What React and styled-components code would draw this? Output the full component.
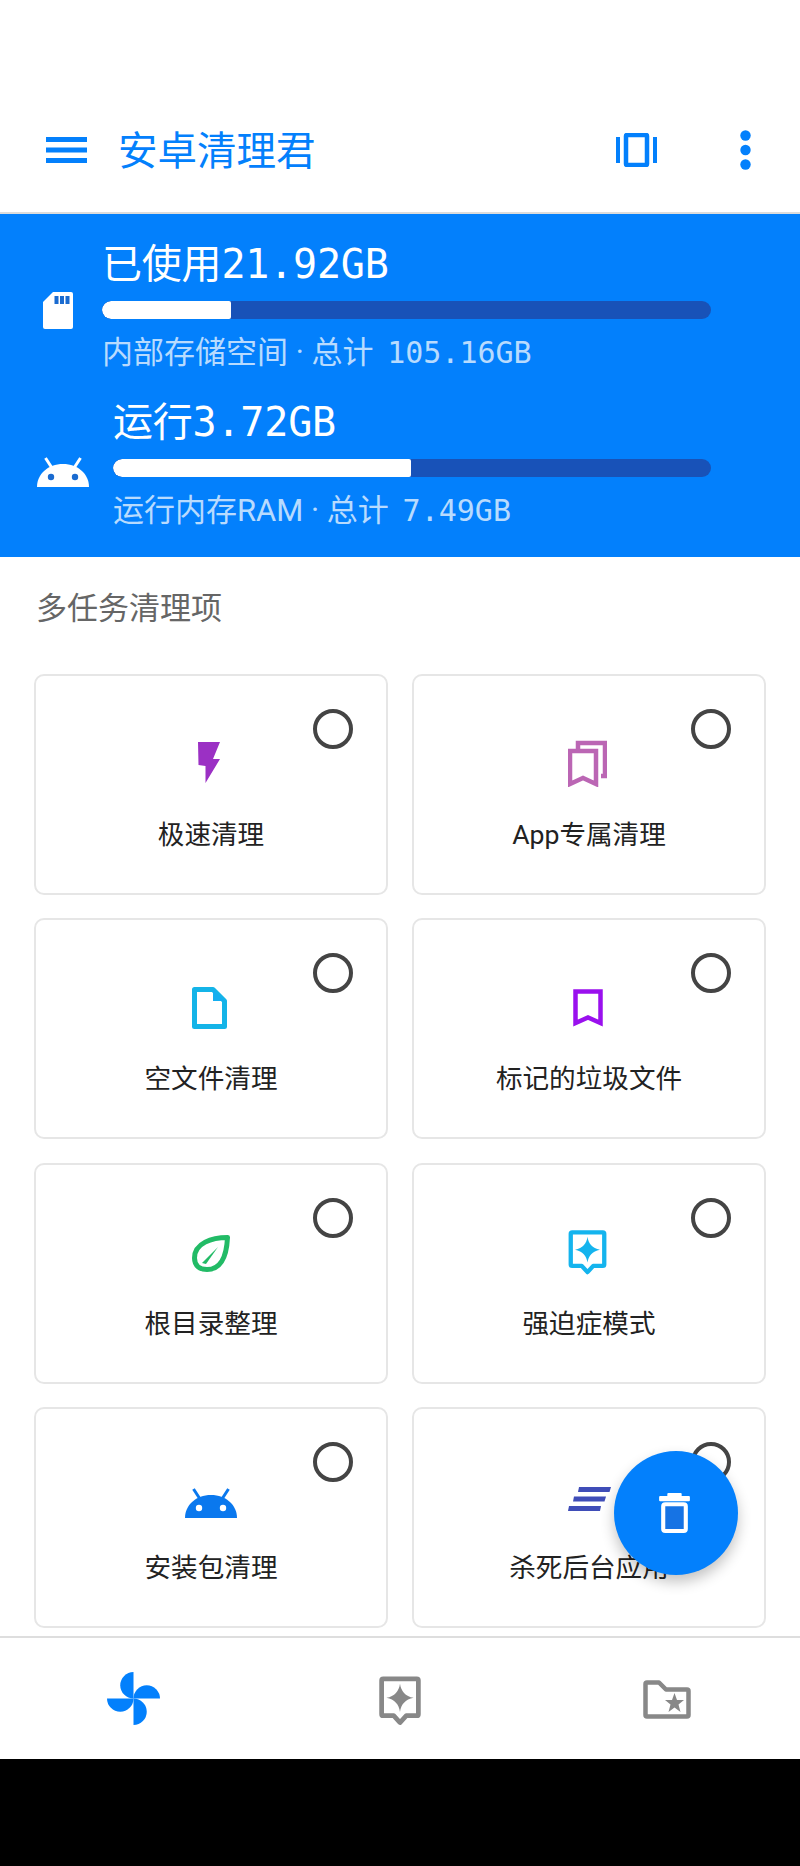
import styled, { createGlobalStyle } from "styled-components";

const BLUE = "#0380fc";
const GREY = "#888888";

const GlobalStyle = createGlobalStyle`
  html, body {
    margin: 0;
    padding: 0;
    background: #ffffff;
  }
  * {
    box-sizing: border-box;
  }
`;

const Page = styled.div`
  position: relative;
  display: flex;
  flex-direction: column;
  width: 800px;
  height: 1866px;
  overflow: hidden;
  background: #fff;
  font-family: Roboto, "Noto Sans CJK SC", sans-serif;
`;

const Header = styled.header`
  display: flex;
  align-items: center;
  height: 214px;
  padding: 119px 49px 31px 46px;
  border-bottom: 2px solid #dcdcdc;
`;

const Title = styled.h1`
  flex: 1;
  margin: 0 0 0 31px;
  padding-top: 3px;
  color: ${BLUE};
  font-size: 39.5px;
  font-weight: 400;
  line-height: 59px;
`;

const HeaderActions = styled.div`
  display: flex;
  align-items: center;
  gap: 82px;
  margin-bottom: 1px;
`;

const StatsPanel = styled.section`
  display: flex;
  flex-direction: column;
  gap: 27px;
  padding: 27px 89px 27px 0;
  background: ${BLUE};
`;

const StatRow = styled.div`
  display: flex;
  align-items: flex-start;
  padding-left: ${(p) => p.$inset}px;
`;

const StatIcon = styled.div`
  display: flex;
  flex: none;
  width: ${(p) => p.$width}px;
  margin-top: ${(p) => p.$top}px;
`;

const StatBody = styled.div`
  flex: 1;
  min-width: 0;
`;

const StatValue = styled.div`
  color: #fff;
  font-family: "DejaVu Sans Mono", "Noto Sans CJK SC", monospace;
  font-size: 40px;
  letter-spacing: -0.2px;
  line-height: 46px;
`;

const Track = styled.div`
  height: 18px;
  margin-top: 14px;
  overflow: hidden;
  border-radius: 9px;
  background: #1852b8;
`;

const Fill = styled.div`
  height: 100%;
  border-radius: 9px 2px 2px 9px;
  background: #fff;
`;

const StatNote = styled.div`
  margin-top: 14px;
  color: rgba(255, 255, 255, 0.72);
  font-size: 31px;
  line-height: 39px;
  white-space: nowrap;
`;

const NoteSize = styled.span`
  margin-left: 6px;
  font-family: "DejaVu Sans Mono", monospace;
  font-size: 30px;
`;

const SectionTitle = styled.h2`
  margin: 32px 0 45px;
  padding-left: 36px;
  color: #666;
  font-size: 31px;
  font-weight: 400;
  line-height: 40px;
`;

const CardGrid = styled.div`
  display: grid;
  grid-template-columns: 354px 354px;
  grid-auto-rows: 221px;
  column-gap: 24px;
  row-gap: 23.4px;
  padding: 0 34px 8px;
`;

const Card = styled.div`
  position: relative;
  display: flex;
  flex-direction: column;
  align-items: center;
  padding-top: 60px;
  border: 2px solid #e6e6e6;
  border-radius: 10px;
  background: #fff;
`;

const Radio = styled.span`
  position: absolute;
  top: 33px;
  right: 33px;
  width: 40px;
  height: 40px;
  border: 4.5px solid #444;
  border-radius: 50%;
`;

const IconSlot = styled.div`
  display: flex;
  align-items: center;
  justify-content: center;
  height: ${(p) => p.$height || 56}px;
  padding-top: ${(p) => p.$nudge || 0}px;
  padding-bottom: ${(p) => p.$lift || 0}px;
  padding-right: ${(p) => p.$pull || 0}px;
`;

const CardLabel = styled.div`
  margin-top: 25px;
  color: #222;
  font-size: 26.6px;
  line-height: 36px;
  white-space: nowrap;
`;

const BottomNav = styled.nav`
  display: grid;
  flex: none;
  grid-template-columns: repeat(3, 1fr);
  align-items: center;
  justify-items: center;
  height: 123px;
  border-top: 2px solid #dedede;
  background: #fff;
`;

const NavBar = styled.div`
  flex: 1;
  background: #000;
`;

const Fab = styled.button`
  position: absolute;
  right: 62px;
  bottom: 291px;
  display: flex;
  align-items: center;
  justify-content: center;
  width: 124px;
  height: 124px;
  padding: 0 3px 0 0;
  border: 0;
  border-radius: 50%;
  background: ${BLUE};
  box-shadow: 0 7px 14px rgba(0, 0, 0, 0.24);
`;

const MenuIcon = () => (
  <svg width="41" height="26" viewBox="0 0 41 26">
    <rect y="0" width="41" height="5" fill={BLUE} />
    <rect y="10.5" width="41" height="5" fill={BLUE} />
    <rect y="21" width="41" height="5" fill={BLUE} />
  </svg>
);

const VibrateIcon = () => (
  <svg width="43" height="34" viewBox="0 0 43 34">
    <rect x="11" y="2" width="21" height="30" rx="1" fill="none" stroke={BLUE} strokeWidth="4.5" />
    <rect x="1" y="4" width="4" height="26" fill={BLUE} />
    <rect x="38" y="4" width="4" height="26" fill={BLUE} />
  </svg>
);

const DotsIcon = () => (
  <svg width="11" height="40" viewBox="0 0 11 40">
    <circle cx="5.5" cy="5.5" r="5.2" fill={BLUE} />
    <circle cx="5.5" cy="20" r="5.2" fill={BLUE} />
    <circle cx="5.5" cy="34.5" r="5.2" fill={BLUE} />
  </svg>
);

const SdCardIcon = () => (
  <svg width="30" height="37" viewBox="0 0 30 37">
    <path d="M10 0H28a2 2 0 0 1 2 2V35a2 2 0 0 1-2 2H2a2 2 0 0 1-2-2V10Z" fill="#fff" />
    <rect x="11.5" y="4" width="4" height="8" fill="#1a6bd0" />
    <rect x="17" y="4" width="4" height="8" fill="#1a6bd0" />
    <rect x="22.5" y="4" width="4" height="8" fill="#1a6bd0" />
  </svg>
);

const AndroidIcon = ({ color, eye }) => (
  <svg width="52" height="30" viewBox="0 0 52 30">
    <path d="M0 30C0 17 11 7 26 7S52 17 52 30Z" fill={color} />
    <path d="M8.5 1L15 11M43.5 1L37 11" stroke={color} strokeWidth="3" fill="none" />
    <circle cx="14" cy="20" r="3.2" fill={eye} />
    <circle cx="38" cy="20" r="3.2" fill={eye} />
  </svg>
);

const BoltIcon = () => (
  <svg width="22" height="41" viewBox="0 0 22 41">
    <path d="M0 0H22L15 17H22L7.5 41V24L0.5 23Z" fill="#9b30c4" />
  </svg>
);

const BookmarksIcon = () => (
  <svg width="39" height="47" viewBox="0 0 39 47" fill="none" stroke="#bb66b4" strokeWidth="4.5">
    <path d="M2 11H28V44L15 38L2 44Z" />
    <path d="M10 9V3H37V36H33" />
  </svg>
);

const FileIcon = () => (
  <svg width="35" height="42" viewBox="0 0 35 42">
    <path d="M2.5 2.500H21L32.500 14V39.500H2.500Z" fill="#fff" stroke="#14b4e8" strokeWidth="5" strokeLinejoin="round" />
    <path d="M21 2L33 14H21Z" fill="#14aef0" />
  </svg>
);

const BookmarkIcon = () => (
  <svg width="30" height="38" viewBox="0 0 30 38">
    <path d="M2.500 2.500H27.500V34L15 28.500L2.500 34Z" fill="none" stroke="#9a10ee" strokeWidth="4.5" />
  </svg>
);

const LeafIcon = () => (
  <svg width="38" height="37" viewBox="0 0 38 37">
    <path d="M35.500 2.500C20 2.500 2.500 8 2.500 23C2.500 31 8 34.500 15 34.500C28 34.500 34.500 24 35.500 2.500Z" fill="none" stroke="#22bb66" strokeWidth="5" strokeLinejoin="round" />
    <path d="M10 28L26 12L14 29Z" fill="#22bb66" />
  </svg>
);

const StarTagIcon = ({ color, width, height }) => (
  <svg width={width} height={height} viewBox="0 0 40 47">
    <path d="M4 2.500H36a1.500 1.500 0 0 1 1.500 1.500V36a1.500 1.500 0 0 1-1.500 1.500H26L20 44L14 37.500H4a1.500 1.500 0 0 1-1.500-1.500V4a1.500 1.500 0 0 1 1.500-1.500Z" fill="none" stroke={color} strokeWidth="4.5" strokeLinejoin="round" />
    <path d="M20 7C21 14 25 19 33 20.500C25 22 21 27 20 34C19 27 15 22 7 20.500C15 19 19 14 20 7Z" fill={color} />
  </svg>
);

const SpeedLinesIcon = () => (
  <svg width="43" height="24" viewBox="0 0 43 24">
    <path d="M11 0H43L41.500 5H10Z" fill="#3f4db8" />
    <path d="M6 9.500H38L36.500 14.500H5Z" fill="#3f4db8" />
    <path d="M1 19H33L32 24H0Z" fill="#3f4db8" />
  </svg>
);

const TrashIcon = () => (
  <svg width="31" height="40" viewBox="0 0 30 39">
    <rect x="8" y="0" width="14" height="4" rx="1" fill="#fff" />
    <rect x="0" y="3" width="30" height="5" rx="1" fill="#fff" />
    <rect x="4" y="11" width="22" height="26" rx="2" fill="#1673e4" stroke="#fff" strokeWidth="4" />
  </svg>
);

const PinwheelIcon = () => (
  <svg width="53" height="53" viewBox="0 0 54 54">
    {[0, 90, 180, 270].map((angle) => (
      <path key={angle} d="M27 27V0A13.500 13.500 0 0 0 27 27Z" fill={BLUE} transform={`rotate(${angle} 27 27)`} />
    ))}
  </svg>
);

const StarFolderIcon = () => (
  <svg width="48" height="39" viewBox="0 0 48 39">
    <path d="M4 2.500H16L23 9.500H44a1.500 1.500 0 0 1 1.500 1.500V35a1.500 1.500 0 0 1-1.500 1.500H4a1.500 1.500 0 0 1-1.500-1.500V4a1.500 1.500 0 0 1 1.500-1.500Z" fill="none" stroke={GREY} strokeWidth="4.5" strokeLinejoin="round" />
    <path d="M31.500 13L34 20H41L35.500 24.500L37.500 32L31.500 27.500L25.500 32L27.500 24.500L22 20H29Z" fill={GREY} />
  </svg>
);

const cards = [
  { label: "极速清理", icon: <BoltIcon />, pull: 4, lift: 3 },
  { label: "App专属清理", icon: <BookmarksIcon />, pull: 4, lift: 2 },
  { label: "空文件清理", icon: <FileIcon />, pull: 4 },
  { label: "标记的垃圾文件", icon: <BookmarkIcon />, pull: 3 },
  { label: "根目录整理", icon: <LeafIcon />, nudge: 2 },
  { label: "强迫症模式", icon: <StarTagIcon color="#14b4ee" width={39} height={45} />, pull: 4 },
  { label: "安装包清理", icon: <AndroidIcon color="#0a78ee" eye="#fff" />, nudge: 12 },
  { label: "杀死后台应用", icon: <SpeedLinesIcon />, nudge: 4 },
];

const stats = [
  {
    value: "已使用21.92GB",
    note: "内部存储空间 · 总计",
    size: "105.16GB",
    percent: 21.2,
    inset: 43,
    width: 59,
    top: 51,
    icon: <SdCardIcon />,
  },
  {
    value: "运行3.72GB",
    note: "运行内存RAM · 总计",
    size: "7.49GB",
    percent: 49.8,
    inset: 37,
    width: 76,
    top: 58,
    icon: <AndroidIcon color="#fff" eye="#1a6bd0" />,
  },
];

const App = () => {
  return (
    <Page>
      <GlobalStyle />
      <Header>
        <MenuIcon />
        <Title>安卓清理君</Title>
        <HeaderActions>
          <VibrateIcon />
          <DotsIcon />
        </HeaderActions>
      </Header>

      <StatsPanel>
        {stats.map((stat) => (
          <StatRow key={stat.value} $inset={stat.inset}>
            <StatIcon $width={stat.width} $top={stat.top}>
              {stat.icon}
            </StatIcon>
            <StatBody>
              <StatValue>{stat.value}</StatValue>
              <Track>
                <Fill style={{ width: `${stat.percent}%` }} />
              </Track>
              <StatNote>
                {stat.note} <NoteSize>{stat.size}</NoteSize>
              </StatNote>
            </StatBody>
          </StatRow>
        ))}
      </StatsPanel>

      <SectionTitle>多任务清理项</SectionTitle>

      <CardGrid>
        {cards.map((card) => (
          <Card key={card.label}>
            <Radio />
            <IconSlot $nudge={card.nudge} $lift={card.lift} $pull={card.pull}>
              {card.icon}
            </IconSlot>
            <CardLabel>{card.label}</CardLabel>
          </Card>
        ))}
      </CardGrid>

      <BottomNav>
        <IconSlot $height={60}>
          <PinwheelIcon />
        </IconSlot>
        <IconSlot $height={60} $nudge={4}>
          <StarTagIcon color={GREY} width={42} height={50} />
        </IconSlot>
        <IconSlot $height={60} $nudge={2}>
          <StarFolderIcon />
        </IconSlot>
      </BottomNav>
      <NavBar />

      <Fab aria-label="清理">
        <TrashIcon />
      </Fab>
    </Page>
  );
};

export default App;
